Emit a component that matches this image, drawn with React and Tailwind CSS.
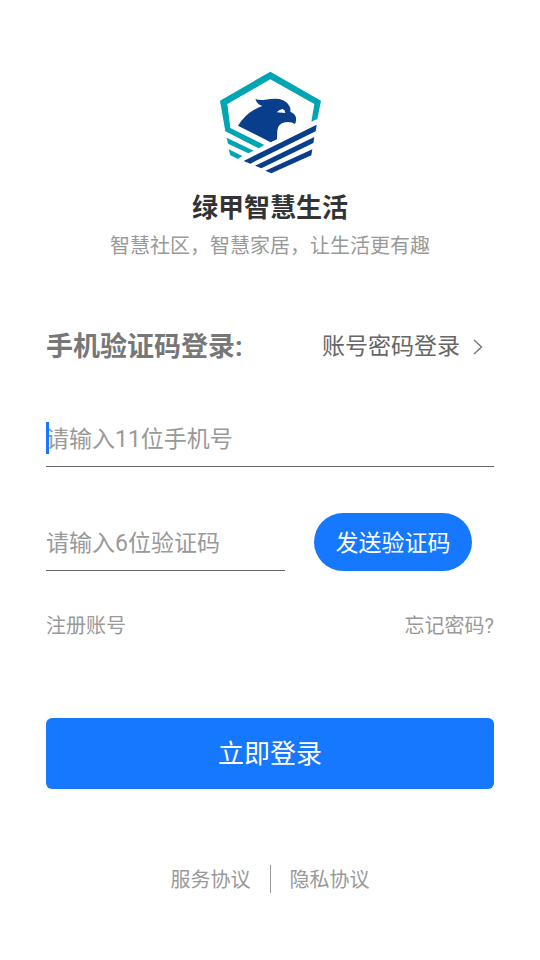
import { useState } from 'react'

function Logo() {
  return (
    <svg className="h-[103px] w-[102px]" viewBox="28 33 306 309" role="img" aria-label="绿甲智慧生活">
      <g fill="#00a5b5">
        <path d="M182 35 L334 122 L323 177 L305 185 L314 132 L182 58 L53 132 L62 204 L164 255 L147 265 L47 214 L31 122 Z" />
        <path d="M51 233 L132 272 L116 280 L55 251 Z" />
        <path d="M57 268 L98 288 L85 297 L62 286 Z" />
      </g>
      <g fill="#083e8b">
        <path d="M321 194 L318 214 L122 311 L102 303 Z" />
        <path d="M314 231 L311 249 L155 325 L136 317 Z" />
        <path d="M308 268 L305 286 L185 340 L167 332 Z" />
        <path
          fillRule="evenodd"
          d="M137 117 Q150 122 167 119 Q192 115 209 117 Q233 122 241 142 Q243 149 242 155 Q258 162 259 174 Q260 183 256 192 Q244 184 226 187 Q205 191 203 211 L202 238 L183 247 L85 197 Q106 165 131 151 Q143 143 158 138 Q143 134 137 117 Z M201 157 Q209 148 219 147 Q227 150 227 159 Z"
        />
      </g>
    </svg>
  )
}

function Chevron() {
  return (
    <svg className="h-5 w-3" viewBox="0 0 12 20" fill="none" stroke="#777777" strokeWidth="1.4" aria-hidden="true">
      <path d="M2 3 L9.5 10 L2 17" />
    </svg>
  )
}

const inputClass =
  'block h-[45px] w-full border-b border-[#666666] bg-transparent pb-[10px] text-[23px] leading-[34px] text-[#333333] outline-none placeholder:text-[#999999] placeholder:opacity-100'

export default function App() {
  const [phone, setPhone] = useState('')
  const [code, setCode] = useState('')

  return (
    <main className="min-h-screen bg-white px-[46px] pt-[71px] pb-16 font-['Roboto','Noto_Sans_CJK_SC',sans-serif]" lang="zh-CN">
      <header className="flex flex-col items-center text-center">
        <Logo />
        <h1 className="mt-4 text-[26px] leading-9 font-bold text-[#333333]">绿甲智慧生活</h1>
        <p className="mt-[6px] text-xl leading-7 text-[#999999]">智慧社区，智慧家居，让生活更有趣</p>
      </header>

      <form onSubmit={(e) => e.preventDefault()}>
        <div className="mt-[67px] flex items-center justify-between pr-[10px]">
          <h2 className="text-[27px] leading-10 font-bold text-[#777777]">手机验证码登录:</h2>
          <a href="#password" className="flex items-center gap-3 text-[23px] leading-8 text-[#666666]">
            账号密码登录
            <Chevron />
          </a>
        </div>

        <div className="relative mt-[55px]">
          <span className="absolute top-0 left-0 h-8 w-[3px] bg-[#1677ff]" aria-hidden="true" />
          <input
            type="tel"
            aria-label="手机号"
            placeholder="请输入11位手机号"
            maxLength={11}
            value={phone}
            onChange={(e) => setPhone(e.target.value)}
            className={inputClass}
          />
        </div>

        <div className="mt-[46px] flex items-end gap-[29px] pr-[22px]">
          <div className="min-w-0 flex-1">
            <input
              type="text"
              inputMode="numeric"
              aria-label="验证码"
              placeholder="请输入6位验证码"
              maxLength={6}
              value={code}
              onChange={(e) => setCode(e.target.value)}
              className={inputClass}
            />
          </div>
          <button type="button" className="h-[58px] w-[158px] shrink-0 rounded-full bg-[#1677ff] pt-1 text-[23px] leading-8 text-white">
            发送验证码
          </button>
        </div>

        <div className="mt-[41px] flex justify-between text-xl leading-7 text-[#999999]">
          <a href="#register">注册账号</a>
          <a href="#forgot">忘记密码?</a>
        </div>

        <button type="submit" className="mt-[78px] h-[71px] w-full rounded-md bg-[#1677ff] text-[26px] leading-9 text-white">
          立即登录
        </button>
      </form>

      <footer className="mt-[76px] flex justify-center gap-[19px] text-xl leading-[30px] text-[#999999]">
        <a href="#terms">服务协议</a>
        <span className="h-7 w-px bg-[#999999]" aria-hidden="true" />
        <a href="#privacy">隐私协议</a>
      </footer>
    </main>
  )
}
